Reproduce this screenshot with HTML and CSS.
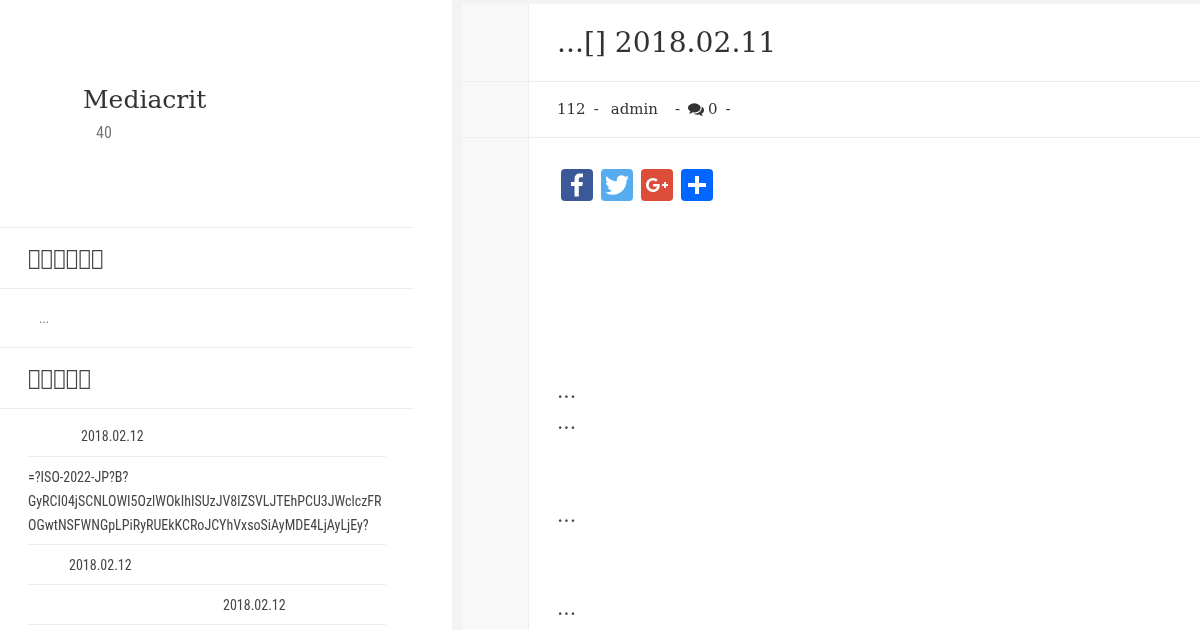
FILE: index.html
```html
<!DOCTYPE html>
<html lang="ja">
<head>
    <meta charset="utf-8"/>
    <meta name="viewport" content="width=device-width, initial-scale=1"/>
    <title>Mediacrit</title>
    <link rel="stylesheet" href="styles.css">
</head>
<body>
    <div class="page">
        <aside class="sidebar">
            <header class="site-head">
                <div class="site-title">Mediacrit</div>
                <div class="site-sub">40</div>
            </header>
            <section class="widget">
                <h3 class="widget-title">&#xE0F0;&#xE0F0;&#xE0F0;&#xE0F0;&#xE0F0;&#xE0F0;</h3>
                <div class="widget-note">...</div>
            </section>
            <section class="widget">
                <h3 class="widget-title">&#xE0F0;&#xE0F0;&#xE0F0;&#xE0F0;&#xE0F0;</h3>
                <ul class="post-list">
                    <li class="post-item"><span class="blank blank-a"></span>2018.02.12</li>
                    <li class="post-item">=?ISO-2022-JP?B?<br>GyRCI04jSCNLOWI5OzlWOkIhISUzJV8lZSVLJTEhPCU3JWclczFR<br>OGwtNSFWNGpLPiRyRUEkKCRoJCYhVxsoSiAyMDE4LjAyLjEy?</li>
                    <li class="post-item"><span class="blank blank-b"></span>2018.02.12</li>
                    <li class="post-item"><span class="blank blank-c"></span>2018.02.12</li>
                </ul>
            </section>
        </aside>
        <main class="content">
            <div class="top-band"></div>
            <div class="row title-row">
                <div class="gutter"></div>
                <h1 class="post-title">...[] 2018.02.11</h1>
            </div>
            <div class="row meta-row">
                <div class="gutter"></div>
                <div class="post-meta">
                    <span>112</span><span class="sep">-</span><span class="author">admin</span><span class="sep sep-wide">-</span>
                    <svg class="comment-icon" viewBox="0 0 1792 1792"><path d="M1408 768q0 139-94 257t-256.5 186.5-353.5 68.5q-86 0-176-16-124 88-278 128-36 9-86 16h-3q-11 0-20.5-8t-11.5-21q-1-3-1-6.5t.5-6.5 2-6l2.5-5 3.5-5.5 4-5 4.5-5 4-4.5q5-6 23-25t26-29.5 22.5-29 25-38.5 20.5-44q-124-72-195-177t-71-224q0-139 94-257t256.5-186.5 353.5-68.5 353.5 68.5 256.5 186.5 94 257zm384 256q0 120-71 224.5t-195 176.5q10 24 20.5 44t25 38.5 22.5 29 26 29.5 23 25q1 1 4 4.5t4.5 5 4 5 3.5 5.5l2.5 5 2 6 .5 6.5-1 6.5q-3 14-13 22t-22 7q-50-7-86-16-154-40-278-128-90 16-176 16-271 0-472-132 58 4 88 4 161 0 309-45t264-129q125-92 192-212t67-254q0-77-23-152 129 71 204 178t75 230z"/></svg>
                    <span>0</span><span class="sep">-</span>
                </div>
            </div>
            <div class="row body-row">
                <div class="gutter"></div>
                <article class="post-body">
                    <div class="share">
                        <a class="share-btn fb" href="#"><svg viewBox="0 0 32 32"><path d="M17.78 27.5V17.008h3.522l.527-4.09h-4.05v-2.61c0-1.182.33-1.99 2.023-1.99h2.166V4.66c-.375-.05-1.66-.16-3.155-.16-3.123 0-5.26 1.905-5.26 5.405v3.016h-3.53v4.09h3.53V27.5h4.223z"/></svg></a>
                        <a class="share-btn tw" href="#"><svg viewBox="0 0 32 32"><path d="M28 8.557a9.913 9.913 0 0 1-2.828.775 4.93 4.93 0 0 0 2.166-2.725 9.738 9.738 0 0 1-3.13 1.194 4.92 4.92 0 0 0-3.593-1.55 4.924 4.924 0 0 0-4.794 6.049c-4.09-.21-7.72-2.17-10.15-5.15a4.942 4.942 0 0 0-.665 2.477c0 1.71.87 3.214 2.19 4.1a4.968 4.968 0 0 1-2.23-.616v.06c0 2.39 1.7 4.38 3.952 4.83-.414.115-.85.174-1.297.174-.318 0-.626-.03-.928-.086a4.935 4.935 0 0 0 4.6 3.42 9.893 9.893 0 0 1-6.114 2.107c-.398 0-.79-.023-1.175-.068a13.953 13.953 0 0 0 7.55 2.213c9.056 0 14.01-7.507 14.01-14.013 0-.213-.005-.426-.015-.637.96-.695 1.795-1.56 2.455-2.55z"/></svg></a>
                        <a class="share-btn gp" href="#"><svg viewBox="0 0 32 32"><path d="M27 15h-2v-2h-2v2h-2v2h2v2h2v-2h2m-15-2v2.4h3.97c-.16 1.03-1.2 3.02-3.97 3.02-2.39 0-4.34-1.98-4.34-4.42s1.95-4.42 4.34-4.42c1.36 0 2.27.58 2.79 1.08l1.9-1.83C15.47 9.69 13.89 9 12 9c-3.87 0-7 3.13-7 7s3.13 7 7 7c4.04 0 6.72-2.84 6.72-6.84 0-.46-.05-.81-.11-1.16H12z"/></svg></a>
                        <a class="share-btn more" href="#"><svg viewBox="0 0 32 32"><path d="M14 7h4v18h-4z"/><path d="M7 14h18v4H7z"/></svg></a>
                    </div>
                    <p class="para para-first">...</p>
                    <p class="para">...</p>
                    <p class="para para-gap">...</p>
                    <p class="para para-gap">...</p>
                </article>
            </div>
        </main>
    </div>
</body>
</html>
```

FILE: styles.css
```css
html, body {
    height: 100%;
}

body {
    margin: 0;
    overflow: hidden;
    background: #fff;
    color: #333;
    font-family: "DejaVu Serif", serif;
}

.page {
    display: flex;
    height: 630px;
    overflow: hidden;
    will-change: transform;
}

/* left column */
.sidebar {
    width: 414px;
    margin-right: 38px;
    flex-shrink: 0;
}

.site-head {
    height: 228px;
    box-sizing: border-box;
    padding: 85px 0 0 83px;
    border-bottom: 1px solid #eee;
}

.site-title {
    font-size: 25px;
    line-height: 30px;
}

.site-sub {
    margin: 8px 0 0 13px;
    font-family: Roboto, sans-serif;
    font-stretch: 75%;
    font-size: 16px;
    line-height: 20px;
    color: #777;
}

.widget-title {
    margin: 0;
    padding: 0 28px;
    height: 60px;
    line-height: 60px;
    font-size: 21px;
    font-weight: normal;
    color: #444;
    border-bottom: 1px solid #eee;
}

.widget-note {
    height: 59px;
    box-sizing: border-box;
    padding: 20px 0 0 39px;
    font-family: Roboto, sans-serif;
    font-size: 13px;
    line-height: 20px;
    color: #777;
    border-bottom: 1px solid #eee;
}

.post-list {
    list-style: none;
    margin: 0 28px;
    padding: 0;
}

.post-item {
    padding: 8px 0 7px;
    font-family: Roboto, sans-serif;
    font-stretch: 75%;
    font-size: 14px;
    line-height: 24px;
    color: #444;
    border-bottom: 1px solid #eee;
}

.post-item:first-child {
    padding: 15px 0 8px;
}

.blank {
    display: inline-block;
}

.blank-a {
    width: 53px;
}

.blank-b {
    width: 41px;
}

.blank-c {
    width: 195px;
}

/* right column */
.content {
    flex: 1;
    background: #f3f3f3;
    padding-left: 10px;
}

.top-band {
    height: 4px;
}

.row {
    display: flex;
    background: #fff;
    border-bottom: 1px solid #eee;
}

.gutter {
    width: 66px;
    flex-shrink: 0;
    background: #f8f8f8;
    border-right: 1px solid #eee;
}

.title-row {
    height: 77px;
}

.post-title {
    margin: 0;
    padding-left: 28px;
    font-size: 28.2px;
    font-weight: normal;
    line-height: 77px;
}

.meta-row {
    height: 55px;
}

.post-meta {
    padding-left: 28px;
    font-size: 15px;
    line-height: 55px;
    display: flex;
    align-items: center;
}

.sep {
    margin: 0 12px 0 8px;
}

.sep-wide {
    margin-left: 17px;
    margin-right: 8px;
}

.comment-icon {
    width: 16px;
    height: 16px;
    fill: #333;
    margin: -2px 4px 0 0;
}

.body-row {
    border-bottom: 0;
    flex: 1;
    min-height: 500px;
}

.post-body {
    padding: 31px 0 0 28px;
}

.share {
    display: flex;
    gap: 8px;
    padding-left: 4px;
}

.share-btn {
    display: block;
    width: 32px;
    height: 32px;
    border-radius: 4px;
}

.share-btn svg {
    display: block;
    width: 32px;
    height: 32px;
    fill: #fff;
}

.fb { background: #3b5998; }
.tw { background: #55acee; }
.gp { background: #dd4b39; }
.more { background: #0166ff; }

.para {
    margin: 0;
    font-size: 20px;
    line-height: 31px;
    color: #444;
}

.para-first {
    margin-top: 175px;
}

.para-gap {
    margin-top: 62px;
}
```
